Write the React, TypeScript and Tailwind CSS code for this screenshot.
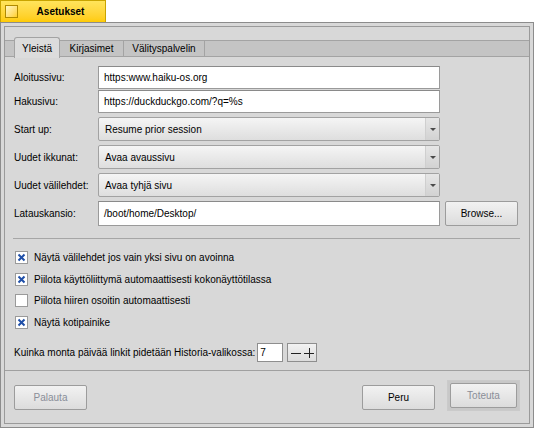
import { ReactNode } from "react";

const font = "font-['Liberation_Sans',Arial,sans-serif]";

function TextField({ value, width = "w-[342px]", height = "h-[23px]" }: { value: string; width?: string; height?: string }) {
  return (
    <div
      className={`${width} ${height} bg-white border border-[#9a9a9a] border-t-[#8a8a8a] flex items-center pl-[5px] text-[10px] text-black whitespace-nowrap`}
    >
      {value}
    </div>
  );
}

function Dropdown({ value }: { value: string }) {
  return (
    <div className="w-[342px] h-[24px] border border-[#a2a2a2] rounded-[2px] bg-gradient-to-b from-[#f5f5f5] to-[#dedede] flex items-center text-[10px] text-black">
      <span className="flex-1 pl-[6px] whitespace-nowrap">{value}</span>
      <div className="w-[14px] h-full border-l border-[#cfcfcf] bg-gradient-to-b from-[#e6e6e6] to-[#d2d2d2] flex items-center justify-center">
        <div className="w-0 h-0 border-l-[3px] border-r-[3px] border-t-[3px] border-l-transparent border-r-transparent border-t-[#4a4a4a]" />
      </div>
    </div>
  );
}

function Button({ children, disabled = false, width = "w-[73px]" }: { children: ReactNode; disabled?: boolean; width?: string }) {
  return (
    <div
      className={`${width} h-[25px] border border-[#9c9c9c] rounded-[2px] bg-gradient-to-b from-[#f2f2f2] to-[#dcdcdc] flex items-center justify-center text-[10px] whitespace-nowrap ${
        disabled ? "text-[#8a8e98]" : "text-black"
      }`}
    >
      {children}
    </div>
  );
}

function Row({ label, children }: { label: string; children: ReactNode }) {
  return (
    <div className="flex items-center">
      <div className="w-[84px] text-[10px] text-black whitespace-nowrap">{label}</div>
      {children}
    </div>
  );
}

function Check({ checked, label }: { checked: boolean; label: string }) {
  return (
    <div className="flex items-center h-[13px]">
      <div className="w-[13px] h-[13px] bg-white border border-[#9a9a9a] flex items-center justify-center">
        {checked && (
          <svg width="9" height="9" viewBox="0 0 9 9">
            <path d="M1.5 1.5 L7.5 7.5 M7.5 1.5 L1.5 7.5" stroke="#1f4fa8" strokeWidth="2" />
          </svg>
        )}
      </div>
      <span className="ml-[6px] text-[10px] text-black whitespace-nowrap">{label}</span>
    </div>
  );
}

export default function App() {
  return (
    <div className={`w-[534px] h-[428px] bg-white ${font}`}>
      {/* window tab */}
      <div className="w-[106px] h-[22px] bg-gradient-to-b from-[#ffe45a] to-[#ffcb00] border border-b-0 border-[#c9a400] flex items-center pl-[4px]">
        <div className="w-[13px] h-[13px] border border-[#b08a00] bg-gradient-to-br from-[#fff6c0] to-[#ffcf10]" />
        <span className="flex-1 text-center font-bold text-[10px] text-black pr-[2px]">Asetukset</span>
      </div>

      {/* window frame */}
      <div className="w-[534px] h-[406px] border border-[#8c8c8c] bg-[#d8d8d8] p-[3px]">
        <div className="w-full h-full border border-[#9a9a9a] bg-[#d8d8d8] flex flex-col">
          {/* tabs */}
          <div className="mt-[13px] h-[17px] border-y border-[#a3a3a3] bg-[#c4c4c4] flex pl-[9px] text-[10px] text-black">
            <div className="-mt-[4px] h-[21px] w-[46px] border border-b-0 border-[#a3a3a3] rounded-t-[3px] bg-[#dcdcdc] flex items-center justify-center pt-[1px]">
              Yleistä
            </div>
            <div className="w-[64px] border-r border-[#a3a3a3] flex items-center justify-center">Kirjasimet</div>
            <div className="w-[81px] border-r border-[#a3a3a3] flex items-center justify-center">Välityspalvelin</div>
          </div>

          {/* general settings */}
          <div className="pl-[9px] pt-[9px] flex flex-col">
            <Row label="Aloitussivu:">
              <TextField value="https:www.haiku-os.org" />
            </Row>
            <div className="mt-[1px]">
              <Row label="Hakusivu:">
                <TextField value="https://duckduckgo.com/?q=%s" />
              </Row>
            </div>
            <div className="mt-[4px] flex flex-col gap-[4px]">
              <Row label="Start up:">
                <Dropdown value="Resume prior session" />
              </Row>
              <Row label="Uudet ikkunat:">
                <Dropdown value="Avaa avaussivu" />
              </Row>
              <Row label="Uudet välilehdet:">
                <Dropdown value="Avaa tyhjä sivu" />
              </Row>
              <Row label="Latauskansio:">
                <TextField value="/boot/home/Desktop/" height="h-[25px]" />
                <div className="ml-[5px]">
                  <Button>Browse...</Button>
                </div>
              </Row>
            </div>

            <div className="mt-[12px] mr-[9px] h-px bg-[#a6a6a6] ml-[-1px]" />

            <div className="mt-[12px] pl-[1px] flex flex-col gap-[8.7px]">
              <Check checked label="Näytä välilehdet jos vain yksi sivu on avoinna" />
              <Check checked label="Piilota käyttöliittymä automaattisesti kokonäyttötilassa" />
              <Check checked={false} label="Piilota hiiren osoitin automaattisesti" />
              <Check checked label="Näytä kotipainike" />
            </div>

            <div className="mt-[14px] flex items-center text-[10px] text-black">
              <span className="mr-[2px] whitespace-nowrap">Kuinka monta päivää linkit pidetään Historia-valikossa:</span>
              <div className="w-[26px] h-[19px] bg-white border border-[#8e8e8e] flex items-center pl-[2px]">7</div>
              <div className="ml-[4px] w-[30px] h-[19px] border border-[#8e8e8e] bg-gradient-to-b from-[#f2f2f2] to-[#dcdcdc] flex items-center justify-center gap-[3px]">
                <svg width="10" height="10" viewBox="0 0 10 10">
                  <path d="M0 5.5 H10" stroke="#222" strokeWidth="1" />
                </svg>
                <svg width="10" height="10" viewBox="0 0 10 10">
                  <path d="M0 5.5 H10 M5.5 0 V10" stroke="#222" strokeWidth="1" />
                </svg>
              </div>
            </div>
          </div>

          <div className="mt-[8px] h-px bg-[#a0a0a0]" />

          {/* buttons */}
          <div className="flex items-center pl-[9px] pr-[9px] pt-[9px]">
            <div className="mt-[3px]">
              <Button disabled>Palauta</Button>
            </div>
            <div className="flex-1" />
            <div className="mt-[3px]">
              <Button>Peru</Button>
            </div>
            <div className="ml-[12px] p-[2px] bg-[#c8c8c8] border border-[#cacaca]">
              <Button disabled width="w-[67px]">
                Toteuta
              </Button>
            </div>
          </div>
        </div>
      </div>
    </div>
  );
}
